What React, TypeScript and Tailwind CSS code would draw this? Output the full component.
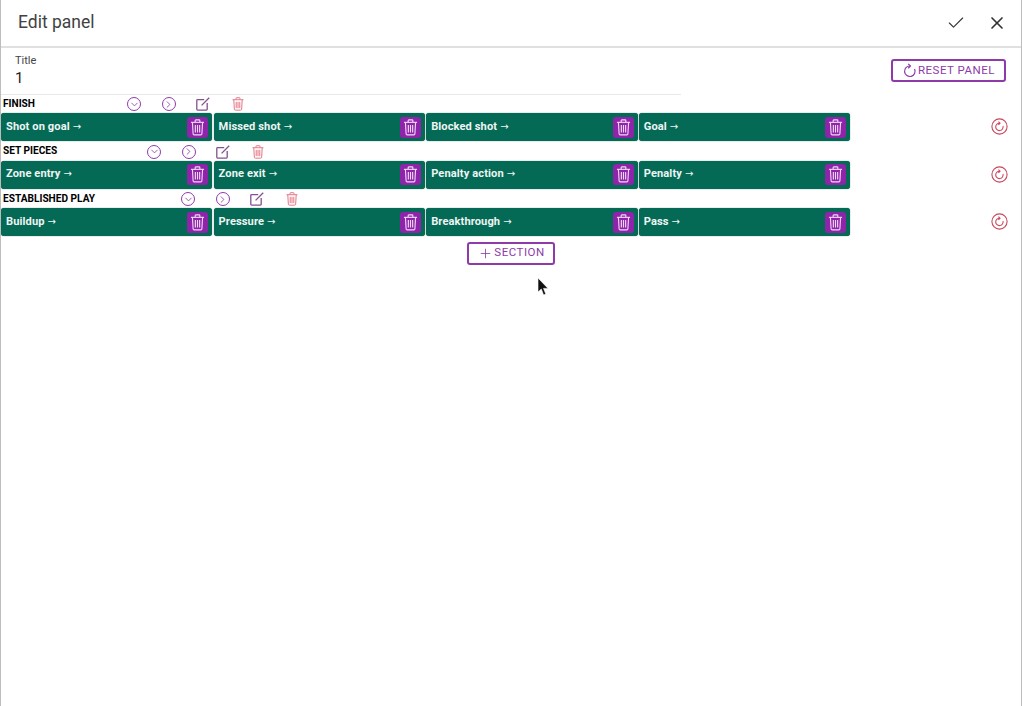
import React from 'react';
import { Check, ChevronDown, ChevronRight, Plus, X } from 'lucide-react';

const TrashIcon = ({ className }: { className: string }) => (
  <svg viewBox="0 0 16 18" fill="none" stroke="currentColor" strokeWidth="1.2" className={className}>
    <path d="M1 3.5h14" />
    <path d="M5.5 3.2V1.6c0-.4.3-.7.7-.7h3.6c.4 0 .7.3.7.7v1.6" />
    <path d="M2.6 3.7l.7 12c0 .7.5 1.2 1.2 1.2h7c.7 0 1.2-.5 1.2-1.2l.7-12" />
    <path d="M5.7 6.2v8.2M8 6.2v8.2M10.3 6.2v8.2" />
  </svg>
);

const EditIcon = ({ className }: { className: string }) => (
  <svg viewBox="0 0 14 14" fill="none" stroke="currentColor" strokeWidth="1.3" className={className}>
    <path d="M8.2 2.6H1.6a.8.8 0 0 0-.8.8v8.9c0 .5.4.8.8.8h8.8c.5 0 .8-.3.8-.8V6" />
    <path d="M5.6 8.4L13.2.8" />
  </svg>
);

const RefreshIcon = ({ className }: { className: string }) => (
  <svg viewBox="0 0 16 16" fill="none" stroke="currentColor" strokeWidth="1.3" className={className}>
    <path d="M8.6 3.2A5.6 5.6 0 1 0 13.4 6.4" />
    <path d="M6.6.9L9 3.2 6.6 5.6" />
  </svg>
);

const CircledRefresh = ({ className }: { className: string }) => (
  <svg viewBox="0 0 17 17" fill="none" stroke="currentColor" strokeWidth="1.1" className={className}>
    <circle cx="8.5" cy="8.5" r="7.6" />
    <path d="M8.8 5.2A3.7 3.7 0 1 0 12 8" />
    <path d="M7.4 3.7L9 5.2 7.4 6.8" />
  </svg>
);

const CircleIcon = ({ children }: { children: React.ReactNode }) => (
  <span className="flex h-[14px] w-[14px] items-center justify-center rounded-full border-[1.5px] border-[#8e3aa8]">
    {children}
  </span>
);

const Card = ({ label }: { label: string }) => (
  <div className="flex h-[28px] w-[211.4px] items-center justify-between rounded-[3px] bg-[#046a56] pl-[5px] pr-[4px] shadow-[0_0_1px_#004d40]">
    <span className="flex items-center gap-[3px] text-[11.1px] font-bold tracking-[0.1px] text-[#eef5f3]">
      {label}
      <span className="font-['DejaVu_Sans',sans-serif] text-[10px] font-normal leading-none">→</span>
    </span>
    <span className="flex h-[21px] w-[21px] items-center justify-center rounded-[3px] bg-[#8e24aa]">
      <TrashIcon className="h-[17px] w-[15px] text-[#f1d9f6]" />
    </span>
  </div>
);

const Section = ({
  title,
  labels,
  offset,
}: {
  title: string;
  labels: string[];
  offset: string;
}) => (
  <section className="h-[47.5px]">
    <div className="flex h-[17px] items-center pb-[1px] pl-[2px]">
      <h2 className={`text-[10.15px] font-bold leading-none text-black ${offset}`}>{title}</h2>
      <div className="flex items-center gap-[20.5px] text-[#8e3aa8]">
        <CircleIcon>
          <ChevronDown size={11} strokeWidth={1.8} />
        </CircleIcon>
        <CircleIcon>
          <ChevronRight size={11} strokeWidth={1.8} />
        </CircleIcon>
        <EditIcon className="h-[14px] w-[14px] text-[#84508f]" />
        <TrashIcon className="h-[14px] w-[14px] text-[#e26d7d]" />
      </div>
    </div>
    <div className="flex items-center pr-[13px]">
      <div className="flex gap-[1.2px]">
        {labels.map((label) => (
          <Card key={label} label={label} />
        ))}
      </div>
      <CircledRefresh className="ml-auto -mt-[1px] h-[17px] w-[17px] text-[#c9475a]" />
    </div>
  </section>
);

const App = () => {
  return (
    <div className="relative h-[706px] w-[1022px] overflow-hidden border-x border-[#bdbdbd] bg-white font-['Roboto',sans-serif]">
      <header className="flex h-[48px] items-center justify-between border-b-2 border-[#e0e0e0] pl-[17px] pr-[14px]">
        <h1 className="text-[17.5px] leading-none text-[#424242]">Edit panel</h1>
        <div className="flex items-center gap-[21px] text-[#333333]">
          <Check size={20} strokeWidth={1.3} />
          <X size={20} strokeWidth={2} />
        </div>
      </header>

      <div className="flex h-[47px] justify-between pr-[15px]">
        <div className="h-[47px] w-[680px] border-b border-[#e8e8e8] pl-[14px] pt-[6px]">
          <div className="text-[11px] leading-[14px] text-[#444444]">Title</div>
          <div className="text-[15px] leading-[20px] text-[#222222]">1</div>
        </div>
        <button className="mt-[11px] flex h-[23px] w-[115px] items-center justify-center gap-[1px] rounded-[3px] border-2 border-[#8e3aa8] text-[11.5px] tracking-[0.5px] text-[#8e3aa8]">
          <RefreshIcon className="h-[15px] w-[15px]" />
          RESET PANEL
        </button>
      </div>

      <div className="pt-[1px]">
        <Section
          title="FINISH"
          offset="mr-[92px]"
          labels={['Shot on goal', 'Missed shot', 'Blocked shot', 'Goal']}
        />
        <Section
          title="SET PIECES"
          offset="mr-[90px]"
          labels={['Zone entry', 'Zone exit', 'Penalty action', 'Penalty']}
        />
        <Section
          title="ESTABLISHED PLAY"
          offset="mr-[86px]"
          labels={['Buildup', 'Pressure', 'Breakthrough', 'Pass']}
        />
      </div>

      <div className="flex justify-center">
        <button className="mt-[3px] flex h-[23px] w-[88px] items-center justify-center gap-[1px] rounded-[3px] border-2 border-[#8e3aa8] pl-[1px] text-[11.5px] tracking-[0.5px] text-[#8e3aa8]">
          <Plus size={15} strokeWidth={1.3} />
          SECTION
        </button>
      </div>

      {/* mouse pointer caught in the capture */}
      <svg viewBox="0 0 12 18" className="absolute left-[536px] top-[278px] h-[18px] w-[12px]">
        <path d="M1 0v14l3.3-3 2.3 6 2.2-1-2.3-5.6H11z" fill="#111" stroke="#fff" strokeWidth="0.6" />
      </svg>
    </div>
  );
};

export default App;
